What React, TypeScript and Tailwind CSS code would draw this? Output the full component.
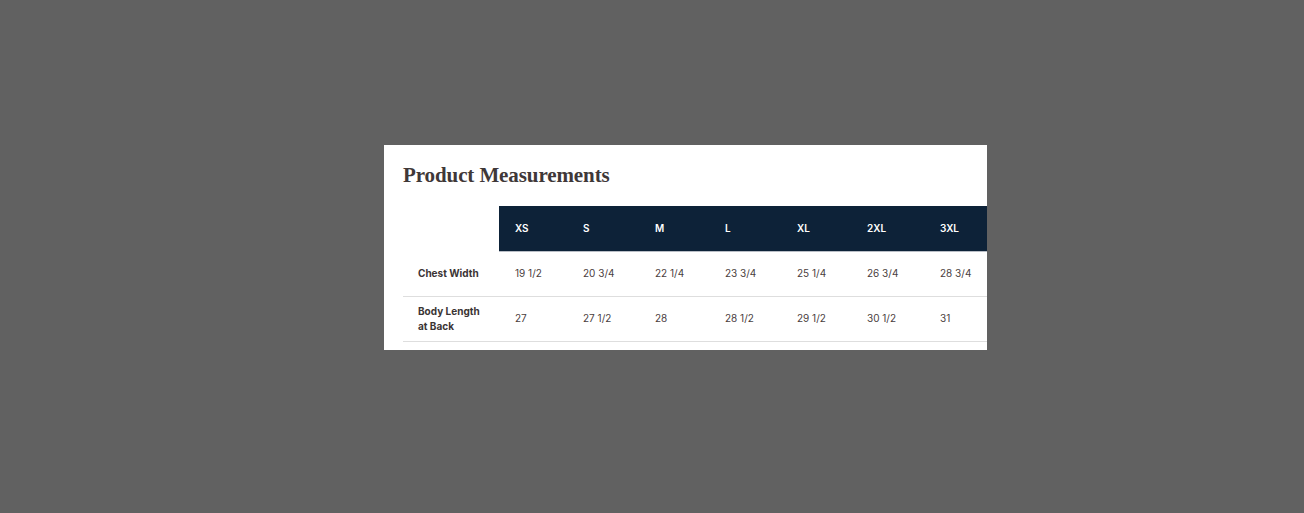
const sizes = ['XS', 'S', 'M', 'L', 'XL', '2XL', '3XL'];
const widths = ['w-[68px]', 'w-[72px]', 'w-[70px]', 'w-[72px]', 'w-[70px]', 'w-[73px]', 'w-[73px]'];

const rows = [
  { label: ['Chest Width'], values: ['19 1/2', '20 3/4', '22 1/4', '23 3/4', '25 1/4', '26 3/4', '28 3/4'] },
  { label: ['Body Length', 'at Back'], values: ['27', '27 1/2', '28', '28 1/2', '29 1/2', '30 1/2', '31'] },
];

export default function App() {
  return (
    <div className="w-[1304px] h-[513px] bg-[#616161] flex items-start justify-start pt-[145px] pl-[384px]">
      <div className="w-[603px] h-[205px] bg-white overflow-hidden pl-[19px] pt-[17px] font-['Inter',sans-serif]">
        <h2 className="font-['Liberation_Serif',serif] font-bold text-[21px] leading-[26px] text-[#3f3838] tracking-[-0.1px]">
          Product Measurements
        </h2>
        <table className="mt-[18px] border-collapse table-fixed w-[594px]">
          <thead>
            <tr className="h-[45px]">
              <th className="w-[96px] bg-white"></th>
              {sizes.map((s, i) => (
                <th
                  key={s}
                  className={`${widths[i]} bg-[#0d2238] border-b border-[#b9bec6] text-left pl-[16px] text-white text-[10px] font-semibold`}
                >
                  {s}
                </th>
              ))}
            </tr>
          </thead>
          <tbody>
            {rows.map((r) => (
              <tr key={r.label[0]} className="h-[45px] border-b border-[#dedede]">
                <td className="pl-[15px] text-[10px] leading-[15px] font-bold text-[#3b3434]">
                  {r.label.map((l) => (
                    <div key={l}>{l}</div>
                  ))}
                </td>
                {r.values.map((v, i) => (
                  <td key={i} className="pl-[16px] text-[10px] text-[#4a4040]">
                    {v}
                  </td>
                ))}
              </tr>
            ))}
          </tbody>
        </table>
      </div>
    </div>
  );
}
